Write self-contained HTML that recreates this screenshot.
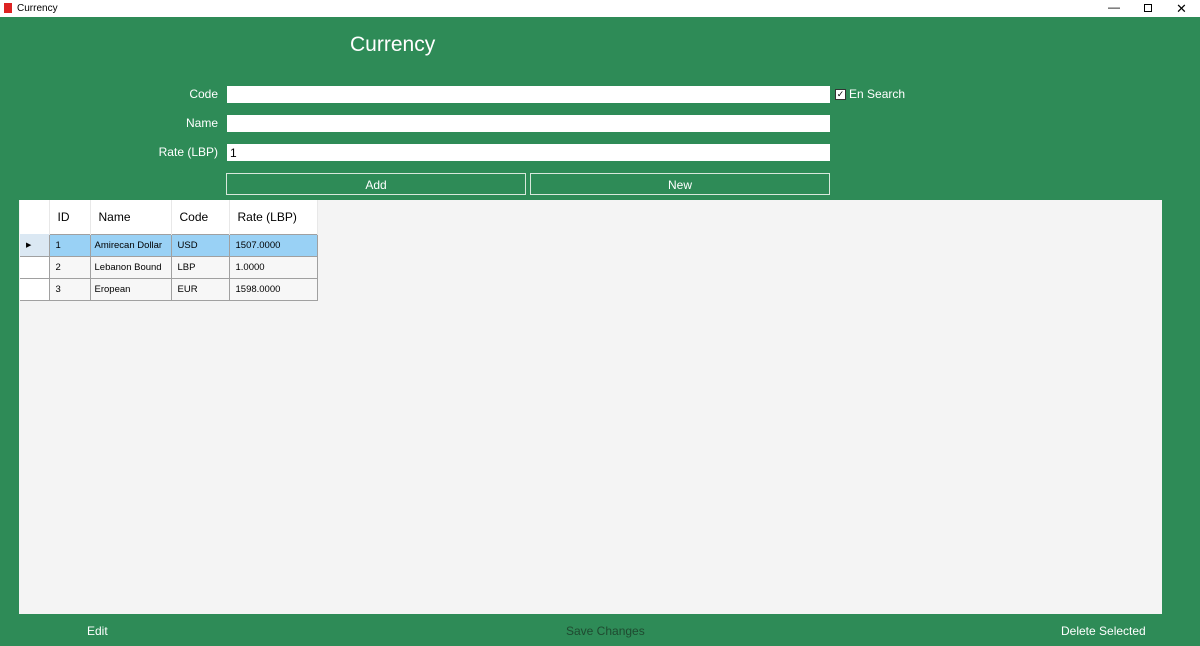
<!DOCTYPE html>
<html><head><style>
body{margin:0;width:1200px;height:646px;overflow:hidden;background:#2e8b57;font-family:"Liberation Sans",sans-serif;position:relative}
.a{position:absolute}
.tb{left:0;top:0;width:1200px;height:17px;background:#fff;font-size:10px;color:#000}
.lbl{color:#fff;font-size:12px;text-align:right;width:120px;left:98px}
.in{background:#fff;left:227px;width:603px;height:17px;font-size:12px;line-height:18px;padding-left:3px;box-sizing:border-box}
.btn{border:1px solid #d8e8dc;color:#fff;font-size:12px;text-align:center;height:22px;line-height:22px;box-sizing:border-box;top:173px}
.grid{left:19px;top:200px;width:1143px;height:414px;background:#f4f4f4}
table{border-collapse:collapse;position:absolute;left:1px;top:0;font-size:9.5px;table-layout:fixed;width:297px}
td{border:1px solid #a0a0a0;padding:0 0 0 6px;height:22px;background:#f7f7f7;white-space:nowrap;overflow:hidden;box-sizing:border-box}
tr.h td{background:#fff;border:none;border-right:1px solid #e8e8e8;height:34px;font-size:12px;padding-left:8px}
tr.s td{background:#99d1f5}
td.rh{background:#fff;border-left:none;border-top:none}
.ft{color:#fff;font-size:12px;top:624px}
</style></head><body>
<div class="a tb"><div class="a" style="left:4px;top:3px;width:8px;height:10px;background:#d22"></div><span class="a" style="left:17px;top:3px">Currency</span>
<span class="a" style="left:1108px;top:0;font-size:12px">—</span>
<div class="a" style="left:1144px;top:4px;width:6px;height:6px;border:1px solid #000"></div>
<span class="a" style="left:1176px;top:1px;font-size:13px">✕</span></div>
<div class="a" style="left:350px;top:33px;color:#fff;font-size:21px">Currency</div>
<div class="a lbl" style="top:87px">Code</div>
<div class="a lbl" style="top:116px">Name</div>
<div class="a lbl" style="top:145px">Rate (LBP)</div>
<div class="a in" style="top:86px"></div>
<div class="a in" style="top:115px"></div>
<div class="a in" style="top:144px">1</div>
<div class="a" style="left:835px;top:89px;width:9px;height:9px;background:#fff;border:1px solid #333;font-size:9px;line-height:9px;text-align:center">✓</div>
<div class="a" style="left:849px;top:87px;color:#fff;font-size:12px">En Search</div>
<div class="a btn" style="left:226px;width:300px">Add</div>
<div class="a btn" style="left:530px;width:300px">New</div>
<div class="a grid">
<table>
<colgroup><col style="width:29px"><col style="width:41px"><col style="width:81px"><col style="width:58px"><col style="width:88px"></colgroup>
<tr class="h"><td class="rh"></td><td>ID</td><td>Name</td><td>Code</td><td>Rate (LBP)</td></tr>
<tr class="s"><td class="rh" style="background:#dbe8f3;font-size:7px">▶</td><td>1</td><td style="padding-left:4px">Amirecan Dollar</td><td>USD</td><td>1507.0000</td></tr>
<tr><td class="rh"></td><td>2</td><td style="padding-left:4px">Lebanon Bound</td><td>LBP</td><td>1.0000</td></tr>
<tr><td class="rh"></td><td>3</td><td style="padding-left:4px">Eropean</td><td>EUR</td><td>1598.0000</td></tr>
</table></div>
<div class="a ft" style="left:87px">Edit</div>
<div class="a ft" style="left:566px;color:#1f4a30">Save Changes</div>
<div class="a ft" style="left:1061px">Delete Selected</div>
</body></html>
